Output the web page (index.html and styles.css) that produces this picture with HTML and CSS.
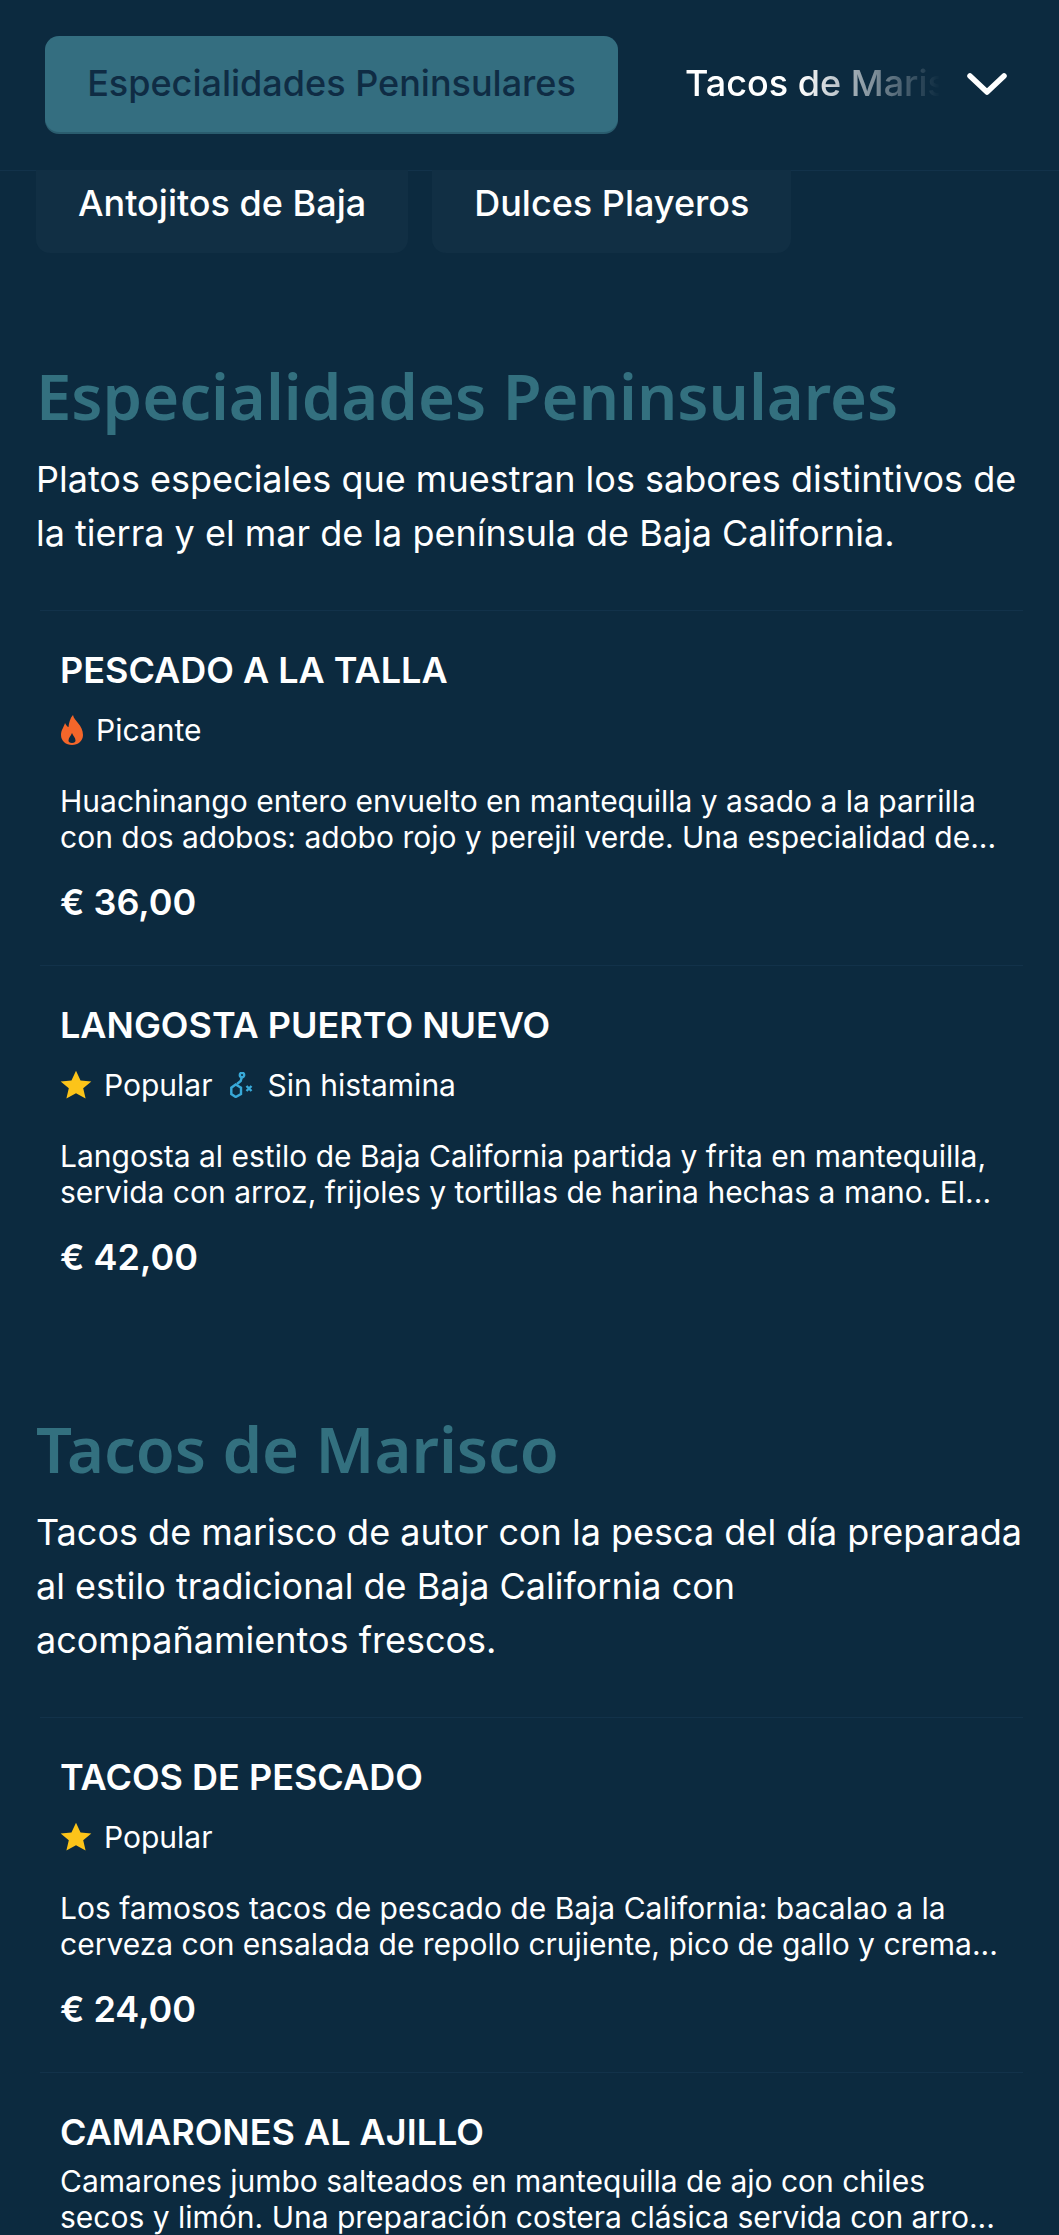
FILE: index.html
```html
<!DOCTYPE html>
<html lang="es">
<head>
    <meta charset="UTF-8">
    <title>Menu</title>
    <link rel="stylesheet" href="styles.css">
</head>
<body>
    <header class="tabbar">
        <div class="tab-active">Especialidades Peninsulares</div>
        <div class="tab-next">Tacos de Marisco</div>
        <svg class="chevron" width="44" height="28" viewBox="0 0 44 28"><path d="M5 6 L22 22 L39 6" fill="none" stroke="#fff" stroke-width="5.500" stroke-linecap="round" stroke-linejoin="round"/></svg>
    </header>

    <nav class="chips">
        <div class="chip">Antojitos de Baja</div>
        <div class="chip">Dulces Playeros</div>
    </nav>

    <section class="section">
        <h2>Especialidades Peninsulares</h2>
        <p class="intro">Platos especiales que muestran los sabores distintivos de la tierra y el mar de la península de Baja California.</p>
        <article class="item">
            <h3>PESCADO A LA TALLA</h3>
            <div class="tags">
                <span class="tag"><svg width="24" height="30" viewBox="0 0 24 30"><path fill-rule="evenodd" d="M13 0c1 6 10 10 10 20 0 6-5 10-11 10S1 26 1 20c0-5 3-8 4-12 1 2 2.500 4 3.500 4 .5-4 1.500-9 4.500-12zM12 18c-1 3-3.500 4.500-3.500 7.500 0 1.500 1 2.500 3.500 2.500s3.500-1 3.500-2.500c0-3-2.500-4.500-3.500-7.500z" fill="#f4662a"/></svg>Picante</span>
            </div>
            <p class="desc">Huachinango entero envuelto en mantequilla y asado a la parrilla con dos adobos: adobo rojo y perejil verde. Una especialidad de...</p>
            <div class="price">€ 36,00</div>
        </article>
        <article class="item">
            <h3>LANGOSTA PUERTO NUEVO</h3>
            <div class="tags">
                <span class="tag"><svg class="star" width="32" height="30" viewBox="0 0 24 24" preserveAspectRatio="none"><path d="M12 .5l3.400 7.800 8.100.8-6.100 5.500 1.800 8.100L12 18.600l-7.200 4.100 1.800-8.100L.5 9.100l8.100-.8z" fill="#fcc419"/></svg>Popular</span>
                <span class="tag"><svg class="molecule" width="24" height="26" viewBox="0 0 24 26" fill="none" stroke="#38a9d8" stroke-width="2.400"><circle cx="12" cy="3" r="2.200"/><path d="M11.800 5.200 L10.700 9 L7 12"/><path d="M5.700 12.500 L11 15.700 V22 L5.700 25 L1.300 22 V15.700z"/><path d="M16.500 14l5 5M21.500 14l-5 5"/></svg>Sin histamina</span>
            </div>
            <p class="desc">Langosta al estilo de Baja California partida y frita en mantequilla, servida con arroz, frijoles y tortillas de harina hechas a mano. El...</p>
            <div class="price">€ 42,00</div>
        </article>
    </section>

    <section class="section">
        <h2>Tacos de Marisco</h2>
        <p class="intro">Tacos de marisco de autor con la pesca del día preparada al estilo tradicional de Baja California con acompañamientos frescos.</p>
        <article class="item">
            <h3>TACOS DE PESCADO</h3>
            <div class="tags">
                <span class="tag"><svg class="star" width="32" height="30" viewBox="0 0 24 24" preserveAspectRatio="none"><path d="M12 .5l3.400 7.800 8.100.8-6.100 5.500 1.800 8.100L12 18.600l-7.200 4.100 1.800-8.100L.5 9.100l8.100-.8z" fill="#fcc419"/></svg>Popular</span>
            </div>
            <p class="desc">Los famosos tacos de pescado de Baja California: bacalao a la cerveza con ensalada de repollo crujiente, pico de gallo y crema...</p>
            <div class="price">€ 24,00</div>
        </article>
        <article class="item">
            <h3>CAMARONES AL AJILLO</h3>
            <p class="desc tight">Camarones jumbo salteados en mantequilla de ajo con chiles secos y limón. Una preparación costera clásica servida con arro...</p>
        </article>
    </section>
</body>
</html>
```

FILE: styles.css
```css
html, body {
    margin: 0;
    height: 2235px;
    overflow: hidden;
}

body {
    background-color: #0c2a3f;
    color: #fff;
    font-family: Inter, "Liberation Sans", sans-serif;
}

.tabbar {
    display: flex;
    align-items: center;
    height: 170px;
    padding-left: 45px;
    border-bottom: 1px solid #12324a;
}

.tab-active {
    width: 573px;
    height: 96px;
    margin-bottom: 2px;
    line-height: 94px;
    text-align: center;
    background-color: #346e80;
    border-radius: 14px;
    box-shadow: 0 2px 0 #2a5c6e;
    color: #0f2c44;
    font-size: 36px;
    font-weight: 500;
    flex-shrink: 0;
}

.tab-next {
    width: 255px;
    margin-left: 67px;
    padding-bottom: 4px;
    font-size: 36px;
    font-weight: 500;
    white-space: nowrap;
    overflow: hidden;
    -webkit-mask-image: linear-gradient(to right, #000 45%, transparent 100%);
    mask-image: linear-gradient(to right, #000 45%, transparent 100%);
}

.chevron {
    margin-left: 25px;
    margin-bottom: 2px;
}

.chips {
    display: flex;
    gap: 24px;
    padding: 0 36px;
    margin-top: -1px;
}

.chip {
    height: 83px;
    line-height: 66px;
    padding: 0 42px;
    background-color: #112f44;
    border-radius: 0 0 14px 14px;
    font-size: 36px;
    font-weight: 500;
}

.section {
    padding: 0 36px;
    margin-bottom: 85px;
}

h2 {
    margin: 0;
    padding-top: 99px;
    font-family: "Noto Sans", sans-serif;
    font-size: 63.300px;
    line-height: 88px;
    font-weight: 600;
    color: #33707f;
}

.section + .section h2 {
    padding-top: 0;
}

.intro {
    margin: 12px 0 50px;
    font-size: 36px;
    line-height: 54px;
}

.item {
    border-top: 1px solid #12324a;
    padding: 37px 20px 41px;
    margin-left: 4px;
}

h3 {
    margin: 0;
    font-size: 36px;
    line-height: 44px;
    font-weight: 600;
}

.tags {
    display: flex;
    gap: 17px;
    margin-top: 18px;
}

.tag {
    display: flex;
    align-items: center;
    gap: 12px;
    font-size: 30px;
    line-height: 40px;
}

.molecule {
    margin-right: 2px;
}

.desc {
    margin: 33px 0 0;
    font-size: 30px;
    line-height: 36px;
}

.desc.tight {
    margin-top: 9px;
}

.price {
    margin-top: 25px;
    font-size: 36px;
    line-height: 44px;
    font-weight: 600;
}
```
